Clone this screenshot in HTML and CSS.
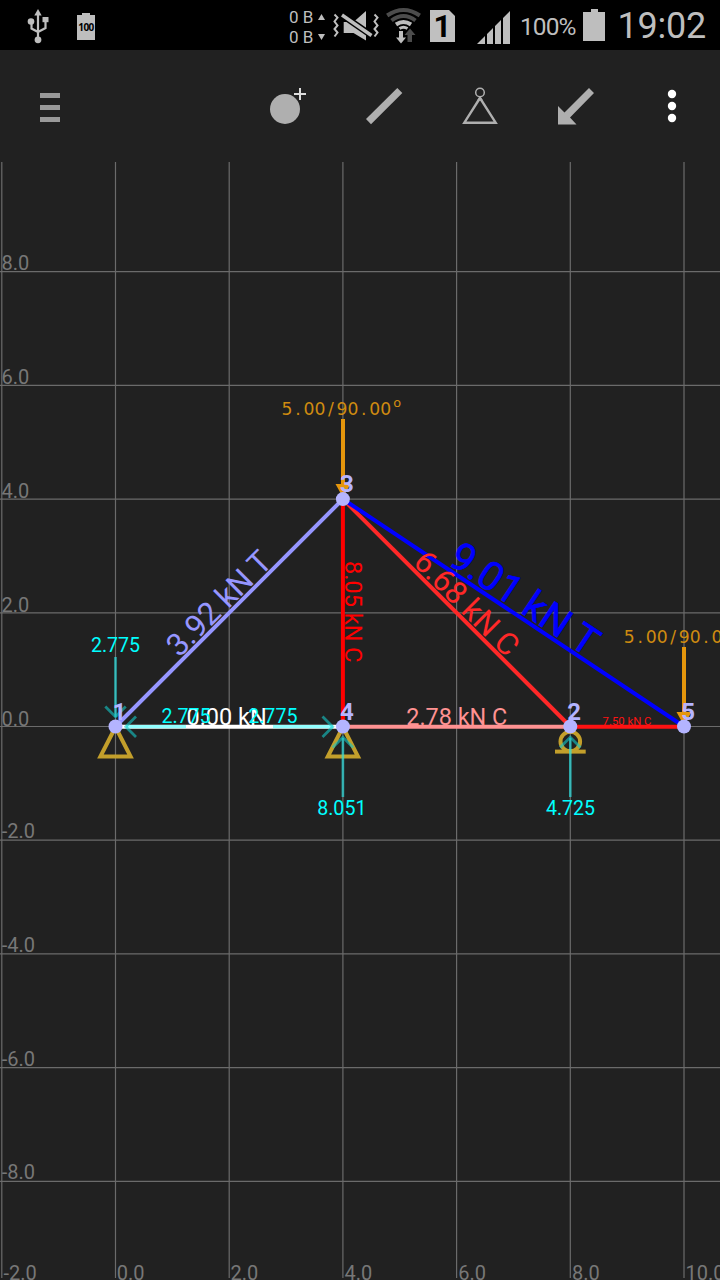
FILE: index.html
```html
<!DOCTYPE html>
<html lang="en">
<head>
<meta charset="utf-8">
<title>Truss</title>
<link rel="stylesheet" href="styles.css">
</head>
<body>
<div class="app">
  <header class="status">
    <svg class="usb" width="22" height="36" viewBox="27 8 22 36">
      <g fill="none" stroke="#bebebe" stroke-width="2.200"><path d="M38 40V14M31.500 22V28.500L38 32M45.500 20V28L38 32"/></g>
      <g fill="#bebebe"><path d="M38 9L41.700 15.500H34.300Z"/><circle cx="31" cy="21.500" r="3.300"/><path d="M42.500 17h6v5.200h-6z"/><circle cx="38" cy="39.800" r="3.400"/></g>
    </svg>
    <div class="mini-battery"><span>100</span></div>
    <div class="spacer"></div>
    <div class="traffic"><div>0 B<svg width="7" height="6" viewBox="0 0 7 6"><path d="M0 6L3.500 0L7 6Z"/></svg></div><div>0 B<svg width="7" height="6" viewBox="0 0 7 6"><path d="M0 0L3.500 6L7 0Z"/></svg></div></div>
    <svg class="mute" width="46" height="36" viewBox="333 8 46 36">
      <path fill="#bebebe" d="M343.700 22h9.800l12.500-11v29.500l-12.500-7.500h-9.800z"/>
      <path stroke="#000" stroke-width="6.600" d="M340 13.600L373 36.400"/>
      <path stroke="#bebebe" stroke-width="3.400" d="M342 15L371.500 35.500"/>
      <path fill="none" stroke="#bebebe" stroke-width="2" d="M334.500 14.500l3 3-3 4 3 4-3 3.500 3 3.500-3 4M374.500 14.500l3 3-3 4 3 4-3 3.500 3 3.500-3 4"/>
    </svg>
    <svg class="wifi" width="36" height="38" viewBox="385 7 36 38">
      <g fill="none"><path stroke="#4c4c4c" stroke-width="4" d="M387.200 15.500Q403.500 4.500 419.800 15.500M391.500 20.500Q403.500 11.500 415.500 20.500"/><path stroke="#bebebe" stroke-width="4" d="M396 24.500Q403.500 19.500 411 24.500"/><path stroke="#bebebe" stroke-width="3" d="M399.500 28.500Q403.500 26 407.500 28.500"/></g>
      <path fill="#bebebe" d="M399 31h4v6.500h3l-5 6-5-6h3z"/>
      <path fill="#4c4c4c" d="M407.500 42v-7h-3l5.500-6.500 5.500 6.500h-3.500v7z"/>
    </svg>
    <div class="sim"><svg width="25" height="32" viewBox="0 0 25 32"><path fill="#c0c0c0" d="M0 0H19L25 6V32H0z"/></svg><b>1</b></div>
    <svg class="signal" width="34" height="34" viewBox="477 11 34 34"><path fill="#bebebe" d="M477 44L485 36V44zM487 34L493 28V44H487zM495 26L501 20V44H495zM503 18L510 11V44H503z"/></svg>
    <span class="pct">100%</span>
    <div class="battery"></div>
    <span class="clock">19:02</span>
  </header>
  <nav class="toolbar">
    <div class="menu"><i></i><i></i><i></i></div>
    <svg class="tools" width="450" height="112" viewBox="260 50 450 112">
      <g fill="#afafaf">
        <circle cx="285" cy="109" r="15"/>
        <path fill="none" stroke="#ddd" stroke-width="2" d="M294 94h12M300 88v12"/>
        <path d="M397.300 88L402.300 93L371 124.200L366 119z"/>
        <g fill="none" stroke="#afafaf"><circle cx="480" cy="92.500" r="4.300" stroke-width="1.500"/><path stroke-width="2.400" d="M480 98L464.300 122.700H495.700z"/></g>
        <path d="M480 96l3 4.500h-6z"/>
        <path d="M589 88L594 93L570 117.500L576.500 124.500H558V106L564.500 112.500z"/>
      </g>
      <g fill="#fff"><circle cx="672" cy="94" r="4.200"/><circle cx="672" cy="106" r="4.200"/><circle cx="672" cy="118" r="4.200"/></g>
    </svg>
  </nav>
  <svg class="plane" width="720" height="1118" viewBox="0 162 720 1118">
    <path class="grid" d="M1.800 162V1278M115.500 162V1278M229.200 162V1278M342.900 162V1278M456.600 162V1278M570.300 162V1278M684 162V1278M0 271.700H720M0 385.400H720M0 499.100H720M0 612.800H720M0 726.500H720M0 840.200H720M0 953.900H720M0 1067.600H720M0 1181.400H720"/>
    <g class="axis">
      <text x="1.500" y="270">8.0</text><text x="1.500" y="383.500">6.0</text><text x="1.500" y="497.500">4.0</text><text x="1.500" y="611.500">2.0</text><text x="1.500" y="725.500">0.0</text><text x="1.800" y="838">-2.0</text><text x="1.800" y="952">-4.0</text><text x="1.800" y="1065.500">-6.0</text><text x="1.800" y="1179">-8.0</text>
      <text x="3.500" y="1280">-2.0</text><text x="116.700" y="1280">0.0</text><text x="230.400" y="1280">2.0</text><text x="344.500" y="1280">4.0</text><text x="458.200" y="1280">6.0</text><text x="571.900" y="1280">8.0</text><text x="685.600" y="1280">10.0</text>
    </g>
    <g class="support">
      <path d="M115.500 727L100.400 756.600H130.600z"/><path d="M342.900 727L327.800 756.600H358z"/><circle cx="570.300" cy="741.500" r="9.800"/><path d="M555 751.600H585.700"/>
    </g>
    <g class="member">
      <path stroke="#9696ff" d="M115.500 726.500L342.900 499.100"/>
      <path stroke="#ff2828" d="M342.900 499.100L570.300 726.500"/>
      <path stroke="#f00" d="M342.900 499.100V726.500"/>
      <path stroke="#fff" d="M115.500 726.700H342.900"/>
      <path stroke="#ff9292" d="M342.900 726.700H570.300"/>
      <path stroke="#ff1212" d="M570.300 726.700H684"/>
      <path stroke="#00f" d="M342.900 499.100L684 726.500"/>
    </g>
    <g class="force">
      <text fill="#9696ff" font-size="31.500" transform="translate(229.200 612.800) rotate(-45)" x="-0.500" y="-3.200">3.92 kN T</text>
      <text fill="#ff2828" font-size="31" transform="translate(456.600 612.800) rotate(45)" x="0.500" y="-3.200">6.68 kN C</text>
      <text fill="#f00" font-size="23.500" transform="translate(342.900 612.800) rotate(90)" x="-1" y="-2.500">8.05 kN C</text>
      <text fill="#fff" font-size="23.500" x="229.500" y="724.500" xml:space="preserve">0.00 kN </text>
      <text fill="#ff9292" font-size="23.400" x="456.800" y="725">2.78 kN C</text>
      <text fill="#ff1212" font-size="11.300" x="627" y="725">7.50 kN C</text>
      <text fill="#00f" stroke="#00f" stroke-width=".6" font-size="40" transform="translate(513.500 612.800) rotate(33.690)" x="1.500" y="-4">9.01 kN T</text>
    </g>
    <g class="shaft">
      <path d="M115.500 657V717M342.900 797V738M570.300 797V738"/>
      <path class="flat" d="M186 726.700H126M273 726.700H333"/>
    </g>
    <path class="heads" d="M105.300 706.500L115.500 716.700L125.700 706.500M136 716.500L125.800 726.700L136 736.900M322.500 716.500L332.700 726.700L322.500 736.900M332.700 747.500L342.900 737.300L353.100 747.500M560.100 747.500L570.300 737.300L580.500 747.500"/>
    <g class="reaction">
      <text x="115.500" y="652">2.775</text><text x="186" y="723.300">2.775</text><text x="272.800" y="723.300">2.775</text><text x="341.800" y="815">8.051</text><text x="570.500" y="815">4.725</text>
    </g>
    <g class="load">
      <path d="M341 419h4v65h5.500L343 497.500L335.500 484h5.500zM682 647h4v65h5.500L684 725.500L676.500 712h5.500z"/>
      <text y="414.900" x="287 298 309 319.900 330.900 341.900 352.900 363.800 374.800 385.800 397.300">5.00/90.00<tspan class="degree">º</tspan></text>
      <text y="642.600" x="629.300 640.300 651.200 662.200 673.200 684.100 695.100 706.100 717">5.00/90.0</text>
    </g>
    <g class="node">
      <text x="112.500" y="719.500">1</text><text x="567.300" y="719.500">2</text><text x="340" y="491.800">3</text><text x="340" y="719.500">4</text><text x="681.300" y="719.500">5</text>
      <circle cx="115.500" cy="726.500" r="7"/><circle cx="570.300" cy="726.500" r="7"/><circle cx="342.900" cy="499.100" r="7"/><circle cx="342.900" cy="726.500" r="7"/><circle cx="684" cy="726.500" r="7"/>
    </g>
  </svg>
</div>
</body>
</html>
```
FILE: styles.css
```css
body { margin: 0; background: #212121; font-family: Roboto, "Liberation Sans", sans-serif; }
.app { width: 720px; height: 1280px; overflow: hidden; display: flex; flex-direction: column; background: #212121; }
.status { height: 50px; flex: none; background: #000; color: #bebebe; display: flex; align-items: flex-start; box-sizing: border-box; padding-left: 27px; }
.status > * { flex: none; }
.usb { margin-top: 8px; }
.mini-battery { width: 18px; height: 27px; margin: 13px 0 0 28px; background: linear-gradient(#bebebe, #bebebe) 5px 0 / 8px 3px no-repeat, linear-gradient(#bebebe, #bebebe) 0 2px / 18px 25px no-repeat; color: #000; text-align: center; }
.mini-battery span { display: block; font: 700 10px/28px "Open Sans", sans-serif; letter-spacing: -0.6px; }
.status .spacer { width: 194px; }
.traffic { width: 38px; margin-top: 7px; font-size: 17px; line-height: 20px; white-space: nowrap; }
.traffic svg { margin-left: 5px; vertical-align: 3px; fill: #bebebe; }
.mute { margin: 8px 0 0 6px; }
.wifi { margin: 7px 0 0 6px; }
.sim { display: grid; margin: 10px 0 0 9px; color: #000; width: 25px; height: 32px; }
.sim > * { grid-area: 1 / 1; }
.sim b { font: 700 31px/33px Roboto, sans-serif; text-align: center; }
.signal { margin: 11px 0 0 22px; }
.pct { width: 63px; margin-left: 9px; font-size: 24.500px; line-height: 53px; letter-spacing: -0.9px; font-weight: 400; }
.battery { width: 22px; height: 32px; margin-top: 9px; background: linear-gradient(#bebebe, #bebebe) 8px 0 / 7px 4px no-repeat, linear-gradient(#bebebe, #bebebe) 0 3px / 22px 29px no-repeat; }
.clock { margin-left: 12.500px; font-size: 36px; line-height: 52px; font-weight: 400; letter-spacing: -0.2px; }
.toolbar { height: 112px; flex: none; display: flex; align-items: flex-start; }
.menu { width: 20px; margin: 43px 0 0 40px; display: flex; flex-direction: column; gap: 7px; }
.menu i { height: 5px; background: #999; }
.tools { margin-left: 200px; }
.plane { display: block; flex: none; }
.grid { fill: none; stroke: #6b6b6b; stroke-width: 1.200; }
.axis { fill: #777; font-size: 20px; }
.member { fill: none; stroke-width: 4; }
.force, .reaction { text-anchor: middle; }
.support { fill: none; stroke: #c39f2b; stroke-width: 4; }
.shaft { fill: none; stroke: #28e6e6; stroke-opacity: .65; stroke-width: 2.600; }
.flat { stroke: #58ffff; stroke-width: 3.200; }
.heads { fill: none; stroke: #14c8c8; stroke-opacity: .6; stroke-width: 2.800; }
.reaction { fill: #00ffff; font-size: 19.600px; }
.load path { fill: #e5960c; }
.load text { fill: #cf8b10; font: 17.200px "DejaVu Sans", sans-serif; text-anchor: middle; }
.load .degree { font: 21px "Open Sans", sans-serif; }
.node { fill: #b4b4ff; }
.node text { font-size: 24px; font-weight: 700; }
```
